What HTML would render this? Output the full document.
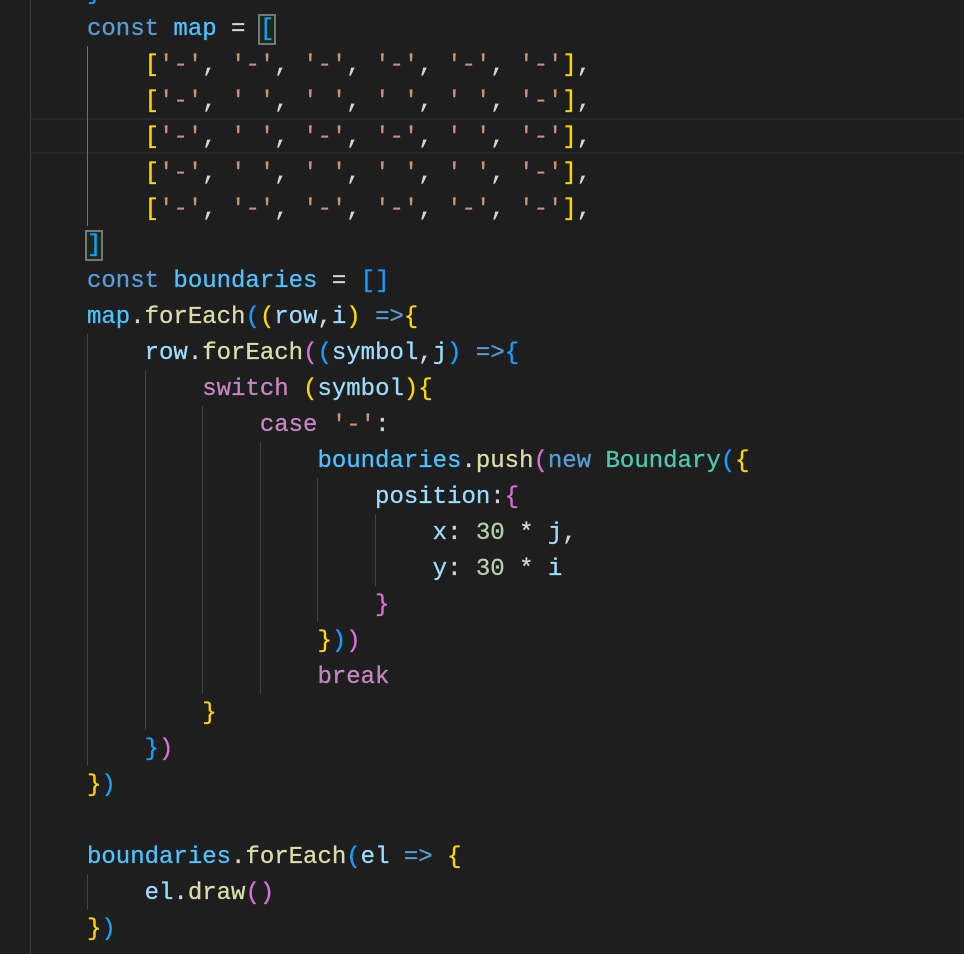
<!DOCTYPE html>
<html><head><meta charset="utf-8"><style>
html,body{margin:0;padding:0;background:#1e1e1e;width:964px;height:954px;overflow:hidden;position:relative}
.l{position:absolute;left:30px;top:0;width:1px;height:954px;background:#3a3a3a}
.hl{position:absolute;left:31px;right:0;top:118px;height:32px;border-top:2px solid #282828;border-bottom:2px solid #282828}
.g{position:absolute;width:1px;background:#404040}
pre{position:absolute;left:87px;top:-24px;margin:0;font-family:"Liberation Mono",monospace;font-size:24px;line-height:36px;color:#d4d4d4;-webkit-text-stroke:0.3px currentColor}
.k{color:#569cd6}.c{color:#4fc1ff}.v{color:#9cdcfe}.f{color:#dcdcaa}.s{color:#ce9178}.p{color:#c586c0}.t{color:#4ec9b0}.n{color:#b5cea8}
.y{color:#ffd700}.m{color:#da70d6}.b{color:#179fff}
.box{outline:2px solid #777;outline-offset:0px;background:#1a2a1a}
</style></head><body>
<div class="l"></div>
<div class="hl"></div>
<div class="g" style="left:87px;top:46px;height:180px;background:#707070"></div>
<div class="g" style="left:87px;top:334px;height:432px"></div>
<div class="g" style="left:145px;top:370px;height:360px"></div>
<div class="g" style="left:202px;top:406px;height:288px"></div>
<div class="g" style="left:260px;top:442px;height:252px"></div>
<div class="g" style="left:317px;top:478px;height:144px"></div>
<div class="g" style="left:375px;top:514px;height:72px"></div>
<div class="g" style="left:87px;top:874px;height:36px"></div>
<pre><span class="b">}</span>
<span class="k">const</span> <span class="c">map</span> = <span class="b box">[</span>
    <span class="y">[</span><span class="s">'-'</span>, <span class="s">'-'</span>, <span class="s">'-'</span>, <span class="s">'-'</span>, <span class="s">'-'</span>, <span class="s">'-'</span><span class="y">]</span>,
    <span class="y">[</span><span class="s">'-'</span>, <span class="s">' '</span>, <span class="s">' '</span>, <span class="s">' '</span>, <span class="s">' '</span>, <span class="s">'-'</span><span class="y">]</span>,
    <span class="y">[</span><span class="s">'-'</span>, <span class="s">' '</span>, <span class="s">'-'</span>, <span class="s">'-'</span>, <span class="s">' '</span>, <span class="s">'-'</span><span class="y">]</span>,
    <span class="y">[</span><span class="s">'-'</span>, <span class="s">' '</span>, <span class="s">' '</span>, <span class="s">' '</span>, <span class="s">' '</span>, <span class="s">'-'</span><span class="y">]</span>,
    <span class="y">[</span><span class="s">'-'</span>, <span class="s">'-'</span>, <span class="s">'-'</span>, <span class="s">'-'</span>, <span class="s">'-'</span>, <span class="s">'-'</span><span class="y">]</span>,
<span class="b box">]</span>
<span class="k">const</span> <span class="c">boundaries</span> = <span class="b">[]</span>
<span class="c">map</span>.<span class="f">forEach</span><span class="b">(</span><span class="y">(</span><span class="v">row</span>,<span class="v">i</span><span class="y">)</span> <span class="k">=&gt;</span><span class="y">{</span>
    <span class="v">row</span>.<span class="f">forEach</span><span class="m">(</span><span class="b">(</span><span class="v">symbol</span>,<span class="v">j</span><span class="b">)</span> <span class="k">=&gt;</span><span class="b">{</span>
        <span class="p">switch</span> <span class="y">(</span><span class="v">symbol</span><span class="y">){</span>
            <span class="p">case</span> <span class="s">'-'</span>:
                <span class="c">boundaries</span>.<span class="f">push</span><span class="m">(</span><span class="k">new</span> <span class="t">Boundary</span><span class="b">(</span><span class="y">{</span>
                    <span class="v">position</span>:<span class="m">{</span>
                        <span class="v">x</span>: <span class="n">30</span> * <span class="v">j</span>,
                        <span class="v">y</span>: <span class="n">30</span> * <span class="v">i</span>
                    <span class="m">}</span>
                <span class="y">}</span><span class="b">)</span><span class="m">)</span>
                <span class="p">break</span>
        <span class="y">}</span>
    <span class="b">}</span><span class="m">)</span>
<span class="y">}</span><span class="b">)</span>

<span class="c">boundaries</span>.<span class="f">forEach</span><span class="b">(</span><span class="v">el</span> <span class="k">=&gt;</span> <span class="y">{</span>
    <span class="v">el</span>.<span class="f">draw</span><span class="m">()</span>
<span class="y">}</span><span class="b">)</span>
</pre>
</body></html>
